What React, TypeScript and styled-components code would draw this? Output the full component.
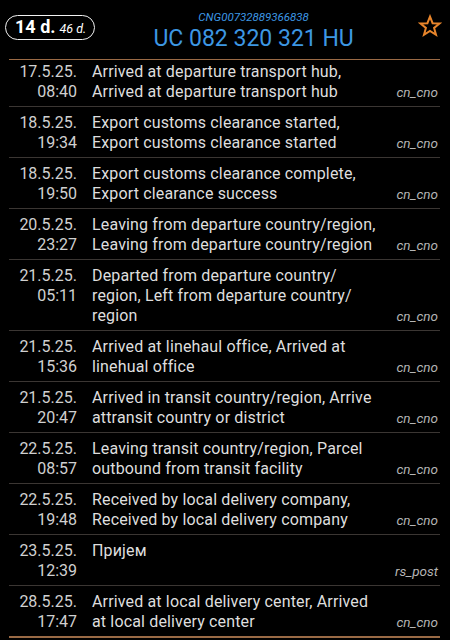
import React from "react";
import styled, { createGlobalStyle } from "styled-components";

const Global = createGlobalStyle`
  html, body { margin: 0; padding: 0; background: #000; }
  body { font-family: Roboto, "Noto Sans", sans-serif; color: #dcdcdc; }
`;

const Page = styled.div`
  width: 450px;
  height: 640px;
  background: #000;
  overflow: hidden;
  display: flex;
  flex-direction: column;
`;

const Header = styled.header`
  height: 59px;
  display: flex;
  align-items: center;
  padding: 0 8px 0 5px;
`;

const Badge = styled.div`
  display: flex;
  align-items: baseline;
  gap: 4px;
  border: 1.5px solid #f2f2f2;
  border-radius: 13px;
  padding: 1px 8px 2px 9px;
  margin-top: -4px;
  color: #fff;
`;

const BadgeMain = styled.span`
  font-weight: 700;
  font-size: 18px;
  line-height: 20px;
`;

const BadgeSub = styled.span`
  font-style: italic;
  font-size: 12.5px;
`;

const TitleBlock = styled.div`
  flex: 1;
  display: flex;
  flex-direction: column;
  align-items: center;
  color: #3d97e3;
  padding: 2px 6px 0 0;
`;

const Sub = styled.div`
  font-style: italic;
  font-size: 11.5px;
  line-height: 12px;
  margin-bottom: 4px;
`;

const Title = styled.div`
  font-size: 23px;
  line-height: 24px;
`;

const StarBtn = styled.div`
  display: flex;
  margin-top: -8px;
`;

const List = styled.div`
  margin: 0 10px 0 9px;
  border-top: 1.5px solid #9a6a45;
  border-bottom: 2px solid #9a6a45;
`;

const Row = styled.div<{ $first?: boolean; $last?: boolean }>`
  display: grid;
  grid-template-columns: 68px 1fr auto;
  column-gap: 15px;
  padding: ${(p) => (p.$first ? "2px" : "6px")} 2px 4px 0;
  border-bottom: ${(p) => (p.$last ? "none" : "1px solid #3b3633")};
  font-size: 16px;
  line-height: 20px;
`;

const DateCol = styled.div`
  text-align: right;
  color: #d0d0d0;
  display: flex;
  flex-direction: column;
`;

const Msg = styled.div`
  color: #dedede;
  letter-spacing: 0.15px;
`;

const Source = styled.div`
  align-self: end;
  font-style: italic;
  font-size: 13.5px;
  color: #b5b5b5;
  line-height: 20px;
  padding-top: 2px;
`;

type Ev = { d: string; t: string; m: string; s: string };

const events: Ev[] = [
  { d: "17.5.25.", t: "08:40", m: "Arrived at departure transport hub, Arrived at departure transport hub", s: "cn_cno" },
  { d: "18.5.25.", t: "19:34", m: "Export customs clearance started, Export customs clearance started", s: "cn_cno" },
  { d: "18.5.25.", t: "19:50", m: "Export customs clearance complete, Export clearance success", s: "cn_cno" },
  { d: "20.5.25.", t: "23:27", m: "Leaving from departure country/region, Leaving from departure country/region", s: "cn_cno" },
  { d: "21.5.25.", t: "05:11", m: "Departed from departure country/\u200Bregion, Left from departure country/\u200Bregion", s: "cn_cno" },
  { d: "21.5.25.", t: "15:36", m: "Arrived at linehaul office, Arrived at linehual office", s: "cn_cno" },
  { d: "21.5.25.", t: "20:47", m: "Arrived in transit country/region, Arrive attransit country or district", s: "cn_cno" },
  { d: "22.5.25.", t: "08:57", m: "Leaving transit country/region, Parcel outbound from transit facility", s: "cn_cno" },
  { d: "22.5.25.", t: "19:48", m: "Received by local delivery company, Received by local delivery company", s: "cn_cno" },
  { d: "23.5.25.", t: "12:39", m: "Пријем", s: "rs_post" },
  { d: "28.5.25.", t: "17:47", m: "Arrived at local delivery center, Arrived at local delivery center", s: "cn_cno" },
];

function StarIcon() {
  return (
    <svg width="24" height="24" viewBox="0 0 24 24">
      <path
        d="M12 2.6 L14.6 9.2 L21.6 9.5 L16.1 13.9 L18 20.8 L12 16.9 L6 20.8 L7.9 13.9 L2.4 9.5 L9.4 9.2 Z"
        fill="none"
        stroke="#e8852b"
        strokeWidth="2"
        strokeLinejoin="miter"
      />
    </svg>
  );
}

export default function App() {
  return (
    <Page>
      <Global />
      <Header>
        <Badge>
          <BadgeMain>14 d.</BadgeMain>
          <BadgeSub>46 d.</BadgeSub>
        </Badge>
        <TitleBlock>
          <Sub>CNG00732889366838</Sub>
          <Title>UC 082 320 321 HU</Title>
        </TitleBlock>
        <StarBtn>
          <StarIcon />
        </StarBtn>
      </Header>
      <List>
        {events.map((e, i) => (
          <Row key={i} $first={i === 0} $last={i === events.length - 1}>
            <DateCol>
              <span>{e.d}</span>
              <span>{e.t}</span>
            </DateCol>
            <Msg>{e.m}</Msg>
            <Source>{e.s}</Source>
          </Row>
        ))}
      </List>
    </Page>
  );
}
